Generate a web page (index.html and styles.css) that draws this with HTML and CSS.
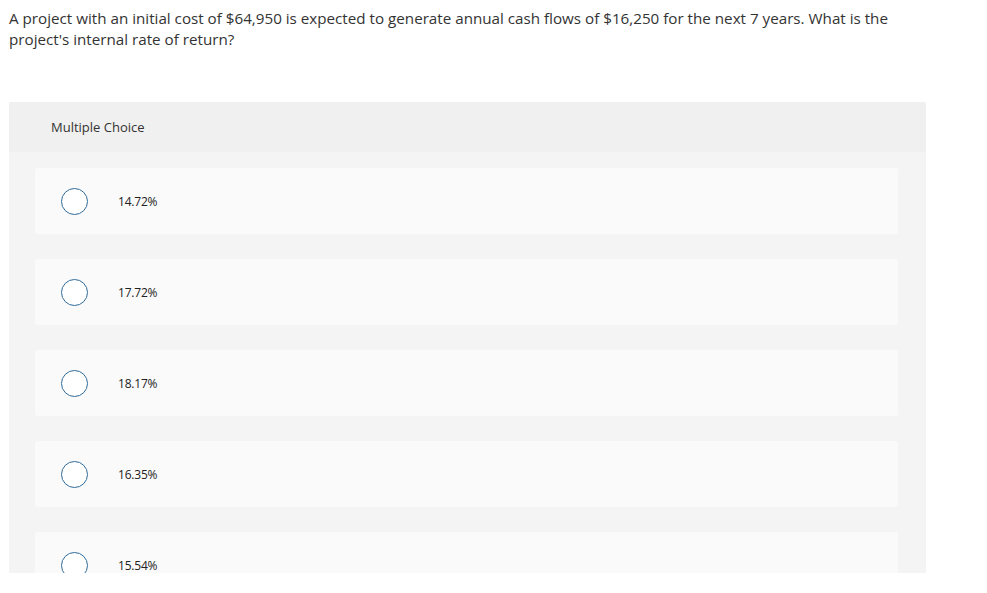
FILE: index.html
```html
<!DOCTYPE html>
<html>
<head>
<meta charset="utf-8">
<link rel="stylesheet" href="styles.css">
</head>
<body>
<p class="question">A project with an initial cost of $64,950 is expected to generate annual cash flows of $16,250 for the next 7 years. What is the project's internal rate of return?</p>
<div class="mc">
  <div class="mc-header">Multiple Choice</div>
  <div class="mc-body">
    <div class="option"><span class="radio"></span><span class="label">14.72%</span></div>
    <div class="option"><span class="radio"></span><span class="label">17.72%</span></div>
    <div class="option"><span class="radio"></span><span class="label">18.17%</span></div>
    <div class="option"><span class="radio"></span><span class="label">16.35%</span></div>
    <div class="option"><span class="radio"></span><span class="label">15.54%</span></div>
  </div>
</div>
</body>
</html>
```
FILE: styles.css
```css
body {
  margin: 0;
  padding: 0 9px;
  background: #fff;
  font-family: "Open Sans", "Liberation Sans", sans-serif;
  color: #333;
}
.question {
  margin: 0;
  padding-top: 8px;
  width: 892px;
  font-size: 15.2px;
  line-height: 21px;
  color: #333;
}
.mc {
  margin-top: 52px;
  width: 917px;
  height: 471px;
  overflow: hidden;
  background: #f4f4f4;
  border-radius: 2px 2px 0 0;
}
.mc-header {
  height: 50px;
  background: #f0f0f0;
  display: flex;
  align-items: center;
  padding-left: 42px;
  font-size: 13px;
  color: #333;
}
.mc-body {
  padding: 16px 28px 0 26px;
  display: flex;
  flex-direction: column;
  gap: 25px;
}
.option {
  flex: none;
  height: 66px;
  background: #fafafa;
  border-radius: 3px;
  display: flex;
  align-items: center;
  padding-left: 26px;
}
.radio {
  width: 25px;
  height: 25px;
  border: 1px solid #2f6b9a;
  border-radius: 50%;
  background: #fff;
  flex: none;
}
.label {
  margin-left: 30px;
  font-size: 12px;
  letter-spacing: -0.2px;
  color: #222;
}
```
